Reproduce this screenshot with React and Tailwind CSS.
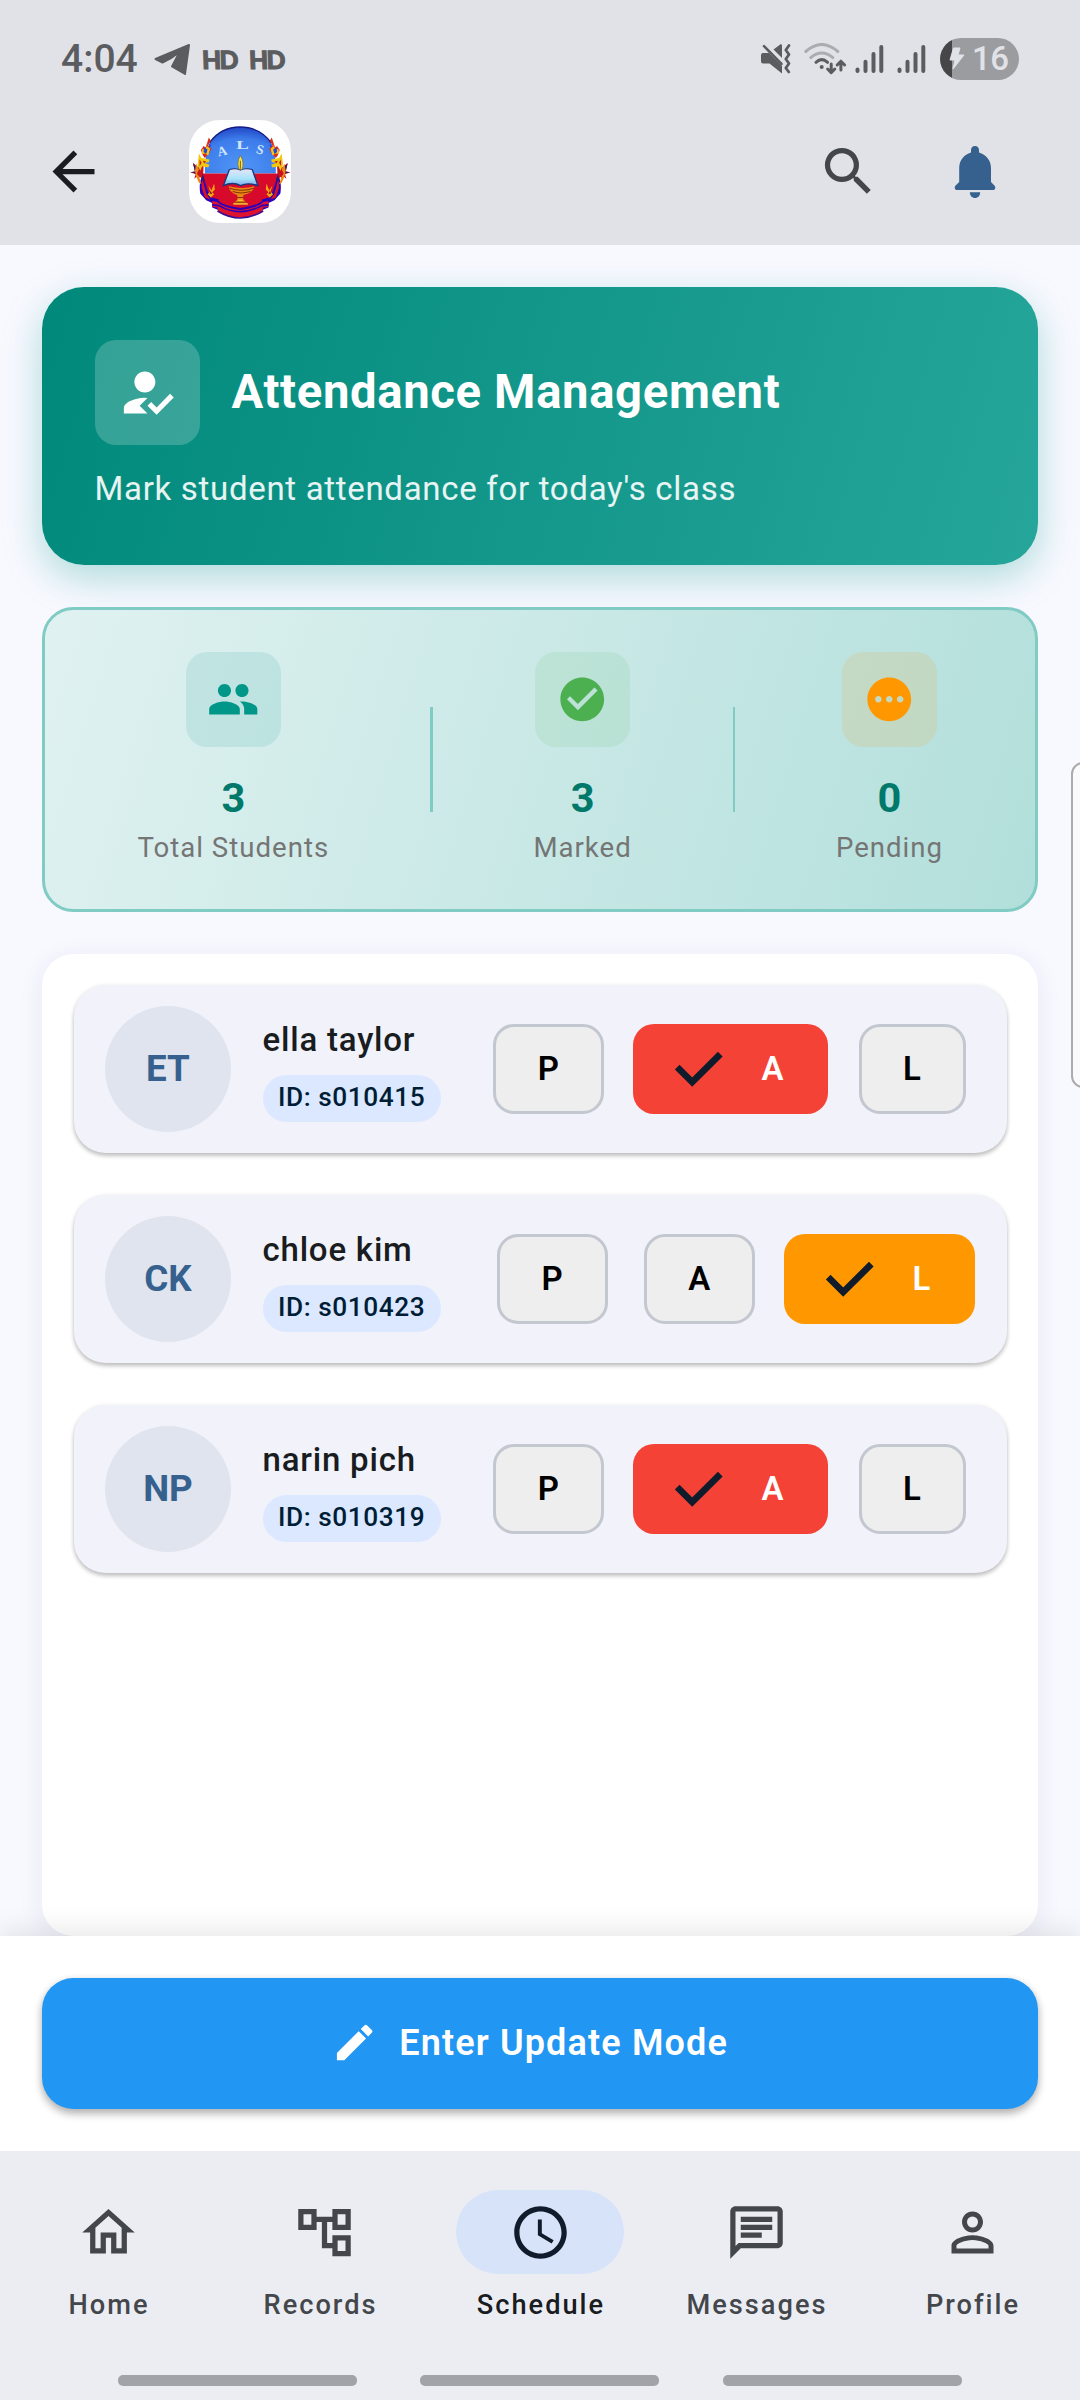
import React from 'react';
import {
  MdArrowBack,
  MdSearch,
  MdHowToReg,
  MdPeople,
  MdCheckCircle,
  MdPending,
  MdEdit,
  MdOutlineHome,
  MdOutlineAccountTree,
  MdAccessTime,
  MdOutlineChat,
  MdPersonOutline,
} from 'react-icons/md';

function SchoolLogo() {
  const side = (
    <g>
      <path d="M62 250 C58 225 62 205 70 195 L84 240 L94 262 L118 276 L118 300 L98 292 L98 278 L80 270 Z" fill="#2b00b8" />
      <path d="M68 205 L80 250 L92 268 L76 262 L66 232 Z" fill="#d8141f" />
      <path d="M32 186 L46 184 L40 158 L56 172 L62 150 L72 170 L70 208 L56 196 L44 206 L48 192 Z" fill="#c8141c" />
      <path d="M32 186 L46 184 L40 160 L48 168 L52 190 Z M66 208 L76 216 L70 190 Z" fill="#2a1a70" />
      <path d="M88 82 L94 92 L86 106 L96 116 L88 130 L76 144 L70 136 L64 120 L72 108 L78 112 Z" fill="#e02a18" />
      <path d="M86 90 L82 108 L92 116 L86 136 L76 130 L66 132 L68 116 L78 120 Z" fill="#f6c416" />
      <path d="M74 112 L84 118 L80 132 L72 126 Z M88 100 L95 106 L90 114 Z" fill="#2446d8" />
      <path d="M58 130 L66 144 L90 148 L88 156 L74 158 L90 164 L86 172 L68 168 L62 182 L54 164 Z" fill="#f3c80f" />
      <path d="M50 160 L58 178 L52 190 L60 204 L66 222 L58 218 L50 200 L46 182 Z" fill="#f08a12" />
      <path d="M60 148 L66 158 L60 168 Z M70 152 L80 154 L74 160 Z M56 190 L62 196 L58 204 Z" fill="#c81820" />
      <path d="M104 220 L96 240 L86 226 L92 244 L84 252 L94 262 L104 252 L98 246 L106 238 Z" fill="#f5a712" />
      <path d="M98 232 L94 242 L98 252 L90 250 Z" fill="#7a1a10" />
    </g>
  );
  return (
    <svg className="h-[103px] w-[102px] rounded-[31px] bg-white" viewBox="28 30 308 308" preserveAspectRatio="none">
      <defs>
        <radialGradient id="sky" cx="50%" cy="85%" r="85%">
          <stop offset="0" stopColor="#4f95f6" />
          <stop offset="0.7" stopColor="#3d7ceb" />
          <stop offset="1" stopColor="#2147c4" />
        </radialGradient>
        <linearGradient id="page" x1="0" y1="0" x2="0" y2="1">
          <stop offset="0" stopColor="#e9e4fa" />
          <stop offset="0.6" stopColor="#a6e4fa" />
          <stop offset="1" stopColor="#7fa8e8" />
        </linearGradient>
      </defs>
      <path d="M76 190 Q74 130 92 96 C116 62 148 51 182 51 C216 51 250 62 274 96 Q292 130 290 190 Z" fill="url(#sky)" />
      <path d="M90 98 C116 62 148 51 182 51 C216 51 250 62 276 98" fill="none" stroke="#141a86" strokeWidth="4" />
      <path d="M70 190 H296 C296 250 262 312 183 314 C104 312 70 250 70 190 Z" fill="#d70a2c" />
      {side}
      <g transform="translate(366 0) scale(-1 1)">{side}</g>
      <path d="M98 262 L118 268 L114 282 L100 276 Z M268 262 L248 268 L252 282 L266 276 Z" fill="#2b00b8" />
      <path d="M98 272 L118 276 Q183 316 248 276 L268 272 L268 290 L252 292 L250 302 Q183 342 116 302 L114 292 L98 290 Z" fill="#df1230" />
      <path d="M112 268 Q122 288 183 296 Q244 288 254 268" fill="none" stroke="#2b00b8" strokeWidth="6" />
      <path d="M98 284 L118 286 Q183 322 248 286 L268 284" fill="none" stroke="#2b00b8" strokeWidth="5" />
      <path d="M114 302 Q183 344 252 302" fill="none" stroke="#3a0f90" strokeWidth="5" />
      <path d="M148 228 Q190 238 226 228 Q222 248 192 254 L192 268 L206 282 H160 L174 268 V254 Q148 246 148 228 Z" fill="#e58a14" />
      <path d="M150 234 Q186 246 224 234 M160 244 Q184 252 214 244 M172 262 H194 M166 276 H200" fill="none" stroke="#8c2f0a" strokeWidth="3" />
      <path d="M162 281 H206 M176 270 H190" stroke="#ffd84a" strokeWidth="3" />
      <path d="M150 178 Q170 172 183 180 Q198 172 219 178 L236 226 Q204 216 184 226 Q160 214 132 226 Z" fill="url(#page)" />
      <path d="M150 178 L132 226 Q160 214 184 226 Q204 216 236 226 L219 178" fill="none" stroke="#123a7c" strokeWidth="4" />
      <path d="M150 178 Q170 172 183 180 Q198 172 219 178" fill="none" stroke="#1c2f66" strokeWidth="3" />
      <path d="M183 136 Q196 156 188 178 H180 Q170 160 183 136 Z" fill="#f7e34a" stroke="#7b6a20" strokeWidth="2" />
      <path d="M183 152 V176" stroke="#8a5a10" strokeWidth="3" />
      <g fill="#cfe6ff" fontFamily="'Liberation Serif', serif" fontWeight="700">
        <text x="114" y="136" fontSize="40" transform="rotate(-14 128 124)">A</text>
        <text x="171" y="117" fontSize="40" textLength="38" lengthAdjust="spacingAndGlyphs">L</text>
        <text x="231" y="132" fontSize="40" transform="rotate(14 243 120)">S</text>
      </g>
    </svg>
  );
}

function SignalBars({ className }) {
  return (
    <svg className={className} width="30" height="30" viewBox="0 0 30 30" fill="none" stroke="#5b5c5f" strokeWidth="4" strokeLinecap="round">
      <path d="M2.5 25.5V27 M10.5 17.8V27 M18.5 10V27 M26.3 3V27" />
    </svg>
  );
}

function HdBadge() {
  return (
    <span className="ml-[11px] w-[36px] skew-x-2 font-['Lato'] text-[25px] leading-[36px] font-black tracking-[-2px] [-webkit-text-stroke:1px]">
      HD
    </span>
  );
}

function StatusBar() {
  return (
    <div className="flex h-[98px] items-center pt-[20px] pr-[61px] pl-[61px] text-[#5b5c5f]">
      <span className="w-[93px] text-[39px] leading-[40px] font-medium">4:04</span>
      <svg width="37" height="33" viewBox="154 45 37 33" fill="#5b5c5f" stroke="#5b5c5f" strokeWidth="2" strokeLinejoin="round">
        <path d="M155.5 61 L189 47 L185 76 L172 68.5 L179.6 54 Q171 61 162.5 64.5 Z" />
      </svg>
      <HdBadge />
      <HdBadge />
      <svg className="ml-auto" width="32" height="32" viewBox="760 44 32 32" fill="#5b5c5f">
        <path d="M763 54H769L782 67V74.5L769.5 64.5H763Q761 64.5 761 62.5V56Q761 54 763 54Z" />
        <path d="M773.5 50.5L780.5 45.3Q782 44.8 782 46.5V59Z" />
        <path d="M764 47.2L781.5 65" stroke="#5b5c5f" strokeWidth="2.6" strokeLinecap="round" />
        <path d="M789 46.5L785.8 51L789 55.5L785.8 60L789 64.5L785.8 69L788.8 73" fill="none" stroke="#5b5c5f" strokeWidth="2.8" strokeLinecap="round" strokeLinejoin="round" />
      </svg>
      <svg className="ml-[12px]" width="43" height="32" viewBox="804 44 43 32" fill="none" strokeWidth="3" strokeLinecap="round" strokeLinejoin="round">
        <path d="M805.8 52.5Q821.7 38.5 837.8 52.5M810.8 58.6Q821.7 49.5 832.8 58.6" stroke="#abacb0" />
        <path d="M816 63.3Q821.7 58 827.6 63.3" stroke="#5b5c5f" />
        <circle cx="821.7" cy="68" r="2" fill="#5b5c5f" />
        <path d="M831.2 65V73.2M827.6 70L831.2 73.6L834.8 70M840.9 71V62.5M837.2 66L840.9 62.2L844.6 66" stroke="#5b5c5f" />
      </svg>
      <SignalBars className="ml-[8px]" />
      <SignalBars className="ml-[12px]" />
      <div className="ml-[13px] flex h-[42px] w-[79px] items-center overflow-hidden rounded-full bg-[linear-gradient(90deg,#464649_12px,#9b9ca0_12px)] text-[#e1e2e8]">
        <svg className="ml-[9px]" width="17" height="24" viewBox="0 0 17 24" fill="#e1e2e8">
          <path d="M4.5 1H11L9 8H15L4 22L6 13H1Z" stroke="#e1e2e8" strokeLinejoin="round" />
        </svg>
        <span className="ml-[6px] text-[33px] leading-[42px] font-medium tracking-[-0.5px]">16</span>
      </div>
    </div>
  );
}

function AppBar() {
  return (
    <div className="flex h-[147px] items-center pl-[42px]">
      <MdArrowBack className="size-[63px] text-[#191c20]" />
      <div className="ml-[84px]">
        <SchoolLogo />
      </div>
      <MdSearch className="ml-[526px] size-[63px] text-[#43474b]" />
      <svg className="ml-[74px]" width="42" height="54" viewBox="954 145 42 54" fill="#36618e">
        <path d="M975 146C977.6 146 979 147.8 979 150.2V152.6C986 154.6 991 160.5 991 168V182L994.4 185.6C996.2 187.6 995 190 992.6 190H957.4C955 190 953.8 187.6 955.6 185.6L959.2 182V168C959.2 160.5 964 154.6 971 152.6V150.2C971 147.8 972.4 146 975 146Z" />
        <path d="M969.8 192.2H980.2C980.2 195.6 978 198 975 198S969.8 195.6 969.8 192.2Z" />
      </svg>
    </div>
  );
}

function HeroCard() {
  return (
    <section className="h-[278px] shrink-0 rounded-[42px] bg-[linear-gradient(105.6deg,#00897b,#26a69a)] px-[52.5px] pt-[52.5px] text-white shadow-[0_13px_39px_rgba(0,150,136,0.3)]">
      <div className="flex items-center gap-[32px]">
        <div className="flex size-[105px] items-center justify-center rounded-[21px] bg-white/20">
          <MdHowToReg className="size-[63px]" />
        </div>
        <h1 className="text-[47.25px] leading-[56px] font-bold tracking-[0.64px]">Attendance Management</h1>
      </div>
      <p className="mt-[20px] text-[33px] leading-[48px] tracking-[0.69px] text-white/90">Mark student attendance for today's class</p>
    </section>
  );
}

function Stat({ icon: Icon, value, label, box, color }) {
  return (
    <div className="flex flex-col items-center">
      <div className={`flex size-[94.5px] items-center justify-center rounded-[21px] ${box}`}>
        <Icon className={`size-[52.5px] ${color}`} />
      </div>
      <span className="mt-[27.5px] text-[41.5px] leading-[48px] font-bold text-[#00796b]">{value}</span>
      <span className="mt-[8px] text-[27.6px] leading-[36px] tracking-[1px] text-[#757575]">{label}</span>
    </div>
  );
}

function StatsCard() {
  return (
    <section className="mt-[42px] flex h-[305px] shrink-0 justify-around rounded-[31.5px] border-3 border-[#80cbc4] bg-[linear-gradient(107deg,#e0f2f1,#b2dfdb)] bg-origin-border pt-[42px] pr-[41.5px] pl-[42px]">
      <Stat icon={MdPeople} value="3" label="Total Students" box="bg-[#009688]/11" color="text-[#009688]" />
      <div className="mt-[55px] h-[105px] w-[2.6px] bg-[#80cbc4]" />
      <Stat icon={MdCheckCircle} value="3" label="Marked" box="bg-[#4caf50]/10" color="text-[#4caf50]" />
      <div className="mt-[55px] h-[105px] w-[2.6px] bg-[#80cbc4]" />
      <Stat icon={MdPending} value="0" label="Pending" box="bg-[#ff9800]/12" color="text-[#ff9800]" />
    </section>
  );
}

const idle = 'border-3 border-[#c3c7cf] bg-[#eeeeee] text-black';

const absentChips = [
  { label: 'P', className: `w-[110.5px] ${idle}` },
  { label: 'A', className: 'ml-[29px] w-[195.5px] bg-[#f44336] pl-[41px] text-white', checked: true },
  { label: 'L', className: `ml-[30.5px] w-[107px] ${idle}` },
];

const lateChips = [
  { label: 'P', className: `w-[111px] ${idle}` },
  { label: 'A', className: `ml-[36px] w-[111.5px] ${idle}` },
  { label: 'L', className: 'ml-[28.5px] w-[191px] bg-[#ff9800] pl-[41px] text-white', checked: true },
];

const students = [
  { initials: 'ET', name: 'ella taylor', id: 's010415', chips: absentChips, end: 'mr-[41px]' },
  { initials: 'CK', name: 'chloe kim', id: 's010423', chips: lateChips, end: 'mr-[32px]' },
  { initials: 'NP', name: 'narin pich', id: 's010319', chips: absentChips, end: 'mr-[41px]' },
];

function Chip({ label, className, checked }) {
  return (
    <button
      className={`flex h-[90px] items-center rounded-[21px] text-[33px] leading-[40px] font-semibold ${checked ? '' : 'justify-center'} ${className}`}
    >
      {checked && (
        <svg className="mr-[38px]" width="50" height="38" viewBox="0 0 50 38" fill="none" stroke="#101c2b" strokeWidth="6.6">
          <path d="M3.2 17.2L18.2 32.2L46.3 4.1" />
        </svg>
      )}
      {label}
    </button>
  );
}

function StudentRow({ initials, name, id, chips, end }) {
  return (
    <li className="flex h-[168px] items-center rounded-[31.5px] bg-[#f2f2fa] pl-[31.5px] shadow-[0_3px_4px_rgba(0,0,0,0.2),0_1px_5px_rgba(0,0,0,0.1)]">
      <div className="flex size-[126px] items-center justify-center rounded-full bg-[#dfe4ee] text-[36.75px] font-bold text-[#36618e]">
        {initials}
      </div>
      <div className="ml-[31.5px] flex flex-col items-start pt-[4px]">
        <span className="text-[33px] leading-[40px] font-medium tracking-[0.8px] text-[#191c20]">{name}</span>
        <span className="mt-[14.5px] rounded-full bg-[#dbe8ff] px-[15.5px] pt-[4px] pb-[6px] text-[26.25px] leading-[37px] font-medium tracking-[0.55px] text-[#001d36]">
          ID: {id}
        </span>
      </div>
      <div className={`ml-auto flex ${end}`}>
        {chips.map((c) => (
          <Chip key={c.label} {...c} />
        ))}
      </div>
    </li>
  );
}

const tabs = [
  { label: 'Home', icon: MdOutlineHome, pad: 'pl-[2px]' },
  { label: 'Records', icon: MdOutlineAccountTree, pad: 'pr-[7px]' },
  { label: 'Schedule', icon: MdAccessTime, active: true, pad: 'pl-[2px]' },
  { label: 'Messages', icon: MdOutlineChat, pad: 'pl-[2px]' },
  { label: 'Profile', icon: MdPersonOutline, pad: 'pl-[2px]' },
];

function BottomNav() {
  return (
    <nav className="relative flex h-[249px] shrink-0 flex-col bg-[#ecedf3] pt-[39px]">
      <div className="grid grid-cols-5">
        {tabs.map(({ label, icon: Icon, active, pad }) => (
          <div key={label} className="flex flex-col items-center">
            <div className={`flex h-[84px] w-[168px] items-center justify-center rounded-full ${active ? 'bg-[#d7e3f8] text-[#101c2b]' : 'text-[#43474b]'}`}>
              <Icon className="size-[63px]" />
            </div>
            <span className={`mt-[13px] text-[27.2px] leading-[36px] font-medium tracking-[2px] ${pad} ${active ? 'text-[#191c20]' : 'text-[#43474b]'}`}>
              {label}
            </span>
          </div>
        ))}
      </div>
      <div className="mt-[52px] flex gap-[63px] pl-[118px]">
        <div className="h-[11px] w-[239px] rounded-[5px] bg-[#a2a3a8]" />
        <div className="h-[11px] w-[239px] rounded-[5px] bg-[#a2a3a8]" />
        <div className="ml-px h-[11px] w-[239px] rounded-[5px] bg-[#a2a3a8]" />
      </div>
    </nav>
  );
}

export default function App() {
  return (
    <div className="relative flex h-[2400px] w-[1080px] flex-col overflow-hidden bg-[#f8f9ff] font-['Roboto',sans-serif]">
      <header className="relative z-10 h-[245px] shrink-0 bg-[#e1e2e7]">
        <StatusBar />
        <AppBar />
      </header>
      <main className="flex flex-1 flex-col px-[42px] pt-[42px]">
        <HeroCard />
        <StatsCard />
        <ul className="mt-[42px] flex flex-1 flex-col gap-[42px] rounded-[31.5px] bg-white px-[31.5px] pt-[31px] shadow-[0_5px_26px_rgba(40,40,90,0.08)]">
          {students.map((s) => (
            <StudentRow key={s.id} {...s} />
          ))}
        </ul>
      </main>
      <div className="relative h-[215px] shrink-0 bg-white px-[42px] pt-[42px] shadow-[0_-5px_26px_rgba(0,0,0,0.1)]">
        <button className="flex h-[131px] w-full items-center justify-center gap-[21px] rounded-[31.5px] bg-[#2196f3] pr-[21px] pb-[1px] text-[36px] leading-[44px] font-semibold tracking-[1.15px] text-white shadow-[0_5px_8px_rgba(0,0,0,0.24),0_2px_8px_rgba(0,0,0,0.12)]">
          <MdEdit className="size-[47.25px]" />
          Enter Update Mode
        </button>
      </div>
      <BottomNav />
      <div className="absolute top-[762px] right-[-15px] h-[326px] w-[24px] rounded-[14px] border-2 border-[#ababab] bg-[#fafafd]" />
    </div>
  );
}
